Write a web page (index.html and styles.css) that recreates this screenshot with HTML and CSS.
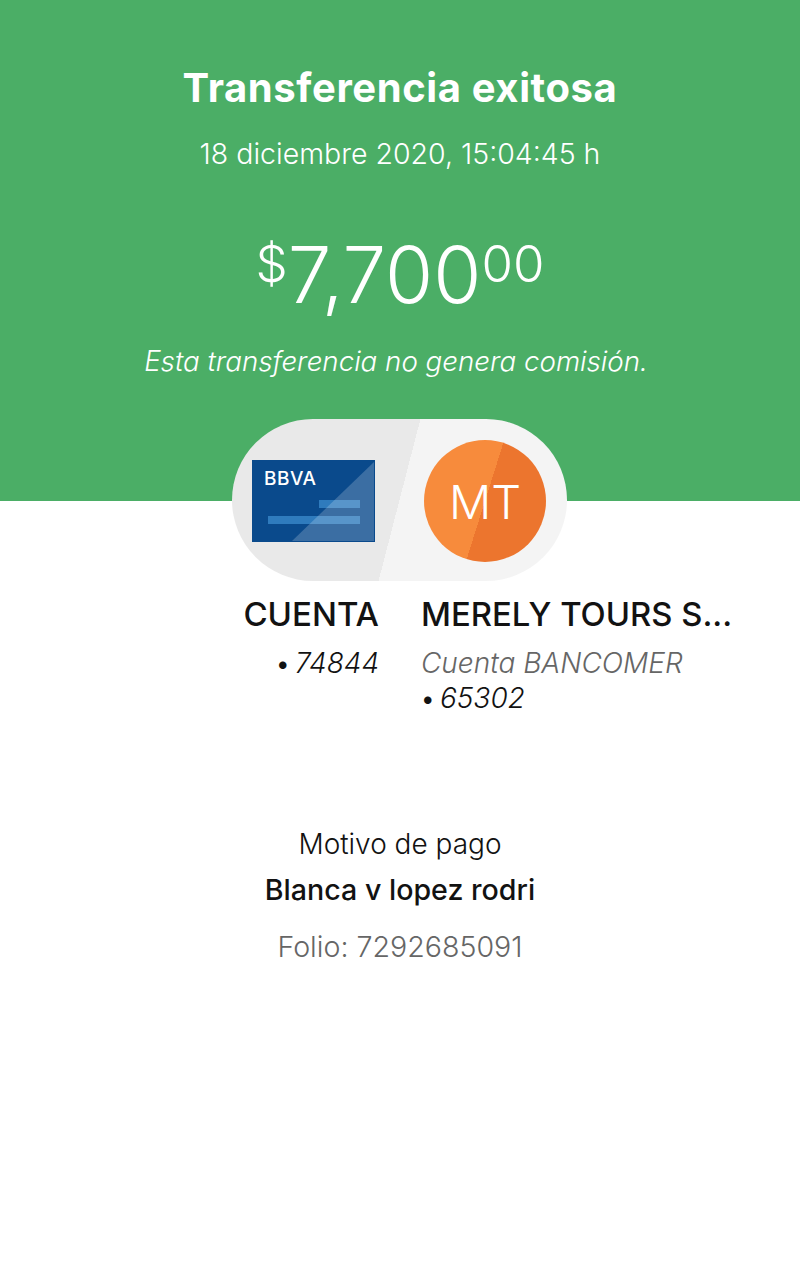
FILE: index.html
```html
<!DOCTYPE html>
<html lang="es">
<head>
<meta charset="utf-8">
<title>Transferencia exitosa</title>
<link rel="stylesheet" href="styles.css">
</head>
<body>
<header class="hero">
  <h1 class="title">Transferencia exitosa</h1>
  <p class="date">18 diciembre 2020, 15:04:45 h</p>
  <p class="amount"><sup class="sup cur">$</sup>7,700<sup class="sup">00</sup></p>
  <p class="note">Esta transferencia no genera comisión.</p>
</header>
<main class="main">
  <div class="pill">
    <svg class="card" width="123" height="82" viewBox="0 0 123 82" aria-label="BBVA">
      <rect width="123" height="82" fill="#0a4a8c"/>
      <rect x="67" y="40" width="41" height="8" fill="#2f7bbd"/>
      <rect x="16" y="56" width="92" height="8" fill="#2f7bbd"/>
      <path d="M122 2V81H40Z" fill="#fff" fill-opacity=".2"/>
      <text x="12" y="25" class="bbva" textLength="52">BBVA</text>
    </svg>
    <div class="avatar"><span>MT</span></div>
  </div>
  <div class="parties">
    <div class="party from">
      <div class="name">CUENTA</div>
      <div class="num"><span class="dot">•</span>74844</div>
    </div>
    <div class="party to">
      <div class="name">MERELY TOURS S...</div>
      <div class="bank">Cuenta BANCOMER</div>
      <div class="num"><span class="dot">•</span>65302</div>
    </div>
  </div>
  <section class="details">
    <div class="reason-label">Motivo de pago</div>
    <div class="reason">Blanca v lopez rodri</div>
    <div class="folio">Folio: 7292685091</div>
  </section>
</main>
</body>
</html>
```
FILE: styles.css
```css
* { box-sizing: border-box; }
html, body { margin: 0; padding: 0; }
body {
  width: 800px;
  height: 1280px;
  overflow: hidden;
  background: #fff;
  color: #121212;
  font-family: Inter, "Liberation Sans", sans-serif;
}
.hero {
  height: 501px;
  padding-top: 65px;
  background: #4bae66;
  color: #fff;
  text-align: center;
}
.title {
  margin: 0;
  font-size: 40px;
  line-height: 46px;
  font-weight: 700;
  letter-spacing: .6px;
}
.date {
  margin: 25px 0 0;
  font-size: 28.5px;
  line-height: 36px;
  font-weight: 300;
}
.amount {
  margin: 55px 0 0;
  font-size: 78px;
  line-height: 96px;
  font-weight: 300;
}
.sup {
  font-size: 51px;
  line-height: 0;
  vertical-align: 21px;
}
.note {
  margin: 20px 0 0;
  padding-right: 8px;
  font-size: 27.7px;
  line-height: 36px;
  font-weight: 300;
  font-style: italic;
}
.main { display: flex; flex-direction: column; }
.pill {
  display: flex;
  align-items: center;
  width: 335px;
  height: 162px;
  margin: -82px 0 0 232px;
  padding: 2px 20px 0;
  border-radius: 81px;
  background: linear-gradient(104.5deg, #e9e9e9 50%, #f4f4f4 50%);
}
.card { flex: none; }
.bbva {
  fill: #fff;
  font-size: 19px;
  font-weight: 500;
}
.avatar {
  display: flex;
  align-items: center;
  justify-content: center;
  width: 122px;
  height: 122px;
  margin-left: 49px;
  border-radius: 50%;
  background: linear-gradient(107.5deg, #f78b3c 50%, #ec752e 50%);
  color: #fff;
  font-size: 47px;
  font-weight: 300;
}
.parties {
  display: flex;
  gap: 42px;
  margin-top: 13px;
}
.from { width: 379px; text-align: right; }
.to { flex: 1; }
.name {
  font-size: 33px;
  line-height: 40px;
  font-weight: 500;
  white-space: nowrap;
}
.to .name { font-size: 32.8px; }
.num, .bank {
  font-size: 28px;
  line-height: 35px;
  font-weight: 300;
  font-style: italic;
}
.dot {
  display: inline-block;
  width: 19px;
  font-size: 24px;
  font-style: normal;
  font-weight: 400;
  text-align: left;
  vertical-align: 1px;
}
.from .num { margin-top: 12px; }
.bank { margin-top: 12px; color: #666; }
.details { margin-top: 110px; text-align: center; }
.reason-label {
  font-size: 28px;
  line-height: 36px;
  font-weight: 300;
}
.reason {
  margin-top: 10px;
  font-size: 28.6px;
  line-height: 36px;
  font-weight: 500;
}
.folio {
  margin-top: 21px;
  font-size: 28.6px;
  line-height: 36px;
  font-weight: 300;
  color: #666;
}
```
